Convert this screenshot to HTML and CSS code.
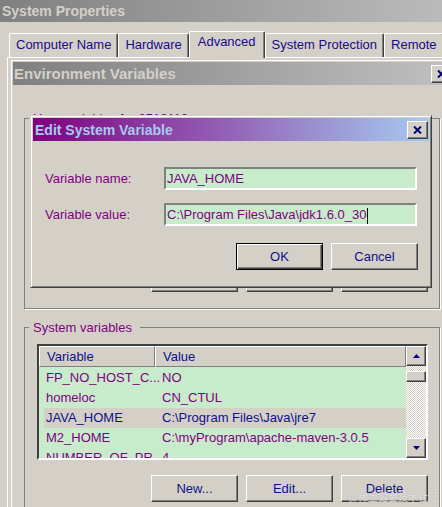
FILE: index.html
```html
<!DOCTYPE html>
<html lang="en">
<head>
    <meta charset="UTF-8">
    <meta name="viewport" content="width=device-width, initial-scale=1.0">
    <title>System Properties - Edit System Variable</title>
    <link rel="stylesheet" href="styles.css">
</head>
<body>

<div class="window sysprops">
    <div class="titlebar inactive">System Properties</div>

    <div class="tabs">
        <div class="tab">Computer Name</div>
        <div class="tab">Hardware</div>
        <div class="tab active">Advanced</div>
        <div class="tab">System Protection</div>
        <div class="tab">Remote</div>
    </div>

    <div class="tab-panel">
        <div class="window envvars">
            <div class="titlebar inactive env-title">
                <span>Environment Variables</span>
                <span class="close-btn">
                    <svg width="9" height="8" viewBox="0 0 9 8"><path d="M1 0.5 L8 7.5 M8 0.5 L1 7.5" stroke="#000080" stroke-width="2"/></svg>
                </span>
            </div>

            <div class="env-body">
                <!-- user list sits behind the edit dialog, only its buttons peek out -->
                <fieldset class="group user-group">
                    <legend>User variables for 2512113</legend>
                    <div class="listbox user-list"></div>
                    <div class="button-row">
                        <button type="button" class="btn"></button>
                        <button type="button" class="btn"></button>
                        <button type="button" class="btn"></button>
                    </div>
                </fieldset>

                <fieldset class="group sys-group">
                    <legend>System variables</legend>
                    <div class="listbox">
                        <div class="list-main">
                            <div class="list-header">
                                <div class="col-var">Variable</div>
                                <div class="col-val">Value</div>
                            </div>
                            <div class="list-row"><div class="col-var">FP_NO_HOST_C...</div><div class="col-val">NO</div></div>
                            <div class="list-row"><div class="col-var">homeloc</div><div class="col-val">CN_CTUL</div></div>
                            <div class="list-row selected"><div class="col-var">JAVA_HOME</div><div class="col-val">C:\Program Files\Java\jre7</div></div>
                            <div class="list-row"><div class="col-var">M2_HOME</div><div class="col-val">C:\myProgram\apache-maven-3.0.5</div></div>
                            <div class="list-row"><div class="col-var">NUMBER_OF_PR...</div><div class="col-val">4</div></div>
                        </div>
                        <div class="scrollbar">
                            <div class="sb-btn">
                                <svg width="7" height="4" viewBox="0 0 7 4"><polygon points="3.5,0 7,4 0,4" fill="#000080"/></svg>
                            </div>
                            <div class="sb-thumb"></div>
                            <div class="sb-track"></div>
                            <div class="sb-btn">
                                <svg width="7" height="4" viewBox="0 0 7 4"><polygon points="0,0 7,0 3.5,4" fill="#000080"/></svg>
                            </div>
                        </div>
                    </div>
                    <div class="button-row">
                        <button type="button" class="btn">New...</button>
                        <button type="button" class="btn">Edit...</button>
                        <button type="button" class="btn">Delete</button>
                    </div>
                </fieldset>
            </div>
        </div>
    </div>
</div>

<div class="window dialog">
    <div class="titlebar active-title">
        <span>Edit System Variable</span>
        <span class="close-btn">
            <svg width="9" height="8" viewBox="0 0 9 8"><path d="M1 0.5 L8 7.5 M8 0.5 L1 7.5" stroke="#000080" stroke-width="2"/></svg>
        </span>
    </div>

    <div class="form">
        <label>Variable name:</label>
        <div class="textbox">JAVA_HOME</div>
        <label>Variable value:</label>
        <div class="textbox">C:\Program Files\Java\jdk1.6.0_30<span class="caret"></span></div>
    </div>

    <div class="dialog-buttons">
        <button type="button" class="btn default">OK</button>
        <button type="button" class="btn">Cancel</button>
    </div>
</div>

<div class="watermark">@稀土掘金技术社区</div>

</body>
</html>
```

FILE: styles.css
```css
body {
    margin: 0;
    background-color: #d4d0c8;
    font-family: "Liberation Sans", Arial, sans-serif;
    font-size: 13px;
    overflow: hidden;
}

.window {
    box-sizing: border-box;
    background-color: #d4d0c8;
}

.sysprops {
    width: 480px;
}

/* title bars */
.titlebar {
    height: 22px;
    line-height: 22px;
    padding-left: 2px;
    font-size: 14px;
    font-weight: bold;
    display: flex;
    justify-content: space-between;
    align-items: center;
    white-space: nowrap;
}

.inactive {
    background: linear-gradient(to right, #808080, #c0c0c0);
    color: #d4d0c8;
}

.active-title {
    height: 23px;
    background: linear-gradient(to right, #800080, #a6caf0);
    color: #a6caf0;
}

.close-btn {
    width: 21px;
    height: 18px;
    box-sizing: border-box;
    margin-right: 1px;
    background-color: #d4d0c8;
    border: 1px solid;
    border-color: #fff #404040 #404040 #fff;
    box-shadow: inset -1px -1px 0 #808080;
    display: flex;
    align-items: center;
    justify-content: center;
}

/* tabs */
.tabs {
    display: flex;
    align-items: flex-end;
    height: 26px;
    margin-top: 9px;
    padding-left: 9px;
}

.tab {
    height: 24px;
    box-sizing: border-box;
    line-height: 22px;
    padding: 0 6px;
    border-top: 1px solid #fff;
    border-left: 1px solid #fff;
    border-right: 1px solid #404040;
    border-radius: 2px 2px 0 0;
    box-shadow: inset -1px 0 0 #808080;
    color: #1a0a8a;
    white-space: nowrap;
}

.tab.active {
    height: 27px;
    line-height: 20px;
    padding: 0 8px;
    margin-bottom: -1px;
    background-color: #d4d0c8;
    position: relative;
    z-index: 1;
}

.tab-panel {
    margin-left: 7px;
    border-top: 1px solid #fff;
    border-left: 1px solid #fff;
    padding: 2px 0 0 3px;
}

/* environment variables window */
.envvars {
    width: 442px;
    border-top: 1px solid #fff;
    border-left: 1px solid #fff;
    padding: 1px 0 0 1px;
}

.env-title {
    height: 23px;
    line-height: 23px;
    font-size: 15px;
    padding-left: 1px;
}

.env-body {
    padding-left: 11px;
}

.group {
    width: 416px;
    box-sizing: border-box;
    margin: 0;
    padding: 0 11px 16px 12px;
    border: 1px solid #808080;
    box-shadow: 1px 1px 0 #fff;
    min-width: 0;
}

.group legend {
    padding: 0 8px 0 4px;
    margin-left: -8px;
    line-height: 15px;
    color: #800080;
}

.user-group {
    margin-top: 26px;
}

.sys-group {
    margin-top: 11px;
}

/* list view */
.listbox {
    height: 116px;
    box-sizing: border-box;
    margin-top: 9px;
    border: 2px solid;
    border-color: #404040 #fff #fff #404040;
    background-color: #c8ebcc;
    display: flex;
}

.user-list {
    height: 121px;
    margin-top: 8px;
}

.list-main {
    flex: 1;
    overflow: hidden;
}

.list-header {
    display: flex;
    height: 21px;
    margin-bottom: 1px;
    background-color: #d4d0c8;
    color: #10108a;
}

.list-header > div {
    box-sizing: border-box;
    border-top: 1px solid #fff;
    border-left: 1px solid #fff;
    border-right: 1px solid #808080;
    border-bottom: 1px solid #808080;
    line-height: 19px;
}

.col-var {
    width: 116px;
    flex-shrink: 0;
    box-sizing: border-box;
    padding-left: 7px;
    white-space: nowrap;
}

.col-val {
    flex: 1;
    padding-left: 7px;
    white-space: nowrap;
    overflow: hidden;
}

.list-row {
    display: flex;
    height: 20px;
    line-height: 20px;
    color: #800080;
}

.list-row.selected {
    margin-left: 5px;
    background-color: #d4d0c8;
    color: #10108a;
}

.list-row.selected .col-var {
    width: 111px;
    padding-left: 2px;
}

.scrollbar {
    width: 20px;
    display: flex;
    flex-direction: column;
    background: repeating-conic-gradient(#fff 0 25%, #d4d0c8 0 50%) 0 0 / 2px 2px;
}

.sb-btn,
.sb-thumb {
    box-sizing: border-box;
    background-color: #d4d0c8;
    border: 1px solid;
    border-color: #fff #404040 #404040 #fff;
    box-shadow: inset -1px -1px 0 #808080;
}

.sb-btn {
    height: 20px;
    display: flex;
    align-items: center;
    justify-content: center;
}

.sb-thumb {
    height: 11px;
    margin-top: 5px;
}

.sb-track {
    flex: 1;
}

/* buttons */
.button-row {
    display: flex;
    justify-content: flex-end;
    gap: 8px;
    margin-top: 10px;
}

.sys-group .button-row {
    margin-top: 15px;
}

.btn {
    width: 87px;
    height: 27px;
    box-sizing: border-box;
    padding: 0;
    background-color: #d4d0c8;
    border: 1px solid;
    border-color: #fff #404040 #404040 #fff;
    box-shadow: inset -1px -1px 0 #808080;
    font-family: "Liberation Sans", Arial, sans-serif;
    font-size: 13px;
    color: #10108a;
}

.btn.default {
    border-color: #000;
    box-shadow: inset 1px 1px 0 #fff, inset -1px -1px 0 #404040, inset -2px -2px 0 #808080;
}

/* edit dialog, lies over the environment variables window */
.dialog {
    position: absolute;
    left: 30px;
    top: 115px;
    width: 402px;
    height: 173px;
    padding: 2px;
    border: 1px solid;
    border-color: #d4d0c8 #404040 #404040 #d4d0c8;
    box-shadow: inset 1px 1px 0 #fff, inset -1px -1px 0 #808080;
}

.form {
    display: grid;
    grid-template-columns: 119px 253px;
    row-gap: 13px;
    align-items: center;
    margin: 26px 0 0 12px;
    color: #800080;
}

.textbox {
    height: 23px;
    box-sizing: border-box;
    border: 2px solid;
    border-color: #808080 #fff #fff #808080;
    background-color: #c8ebcc;
    line-height: 19px;
    padding-left: 1px;
    white-space: nowrap;
}

.caret {
    display: inline-block;
    width: 1px;
    height: 16px;
    margin-left: 1px;
    background-color: #000;
    vertical-align: middle;
}

.dialog-buttons {
    display: flex;
    justify-content: flex-end;
    gap: 8px;
    margin-top: 17px;
    padding-right: 11px;
}

.watermark {
    position: absolute;
    right: 4px;
    bottom: 3px;
    font-family: "Noto Sans CJK SC", sans-serif;
    font-size: 10px;
    color: rgba(255, 255, 255, 0.7);
    text-shadow: 0 0 1px #9a9a9a;
}
```
